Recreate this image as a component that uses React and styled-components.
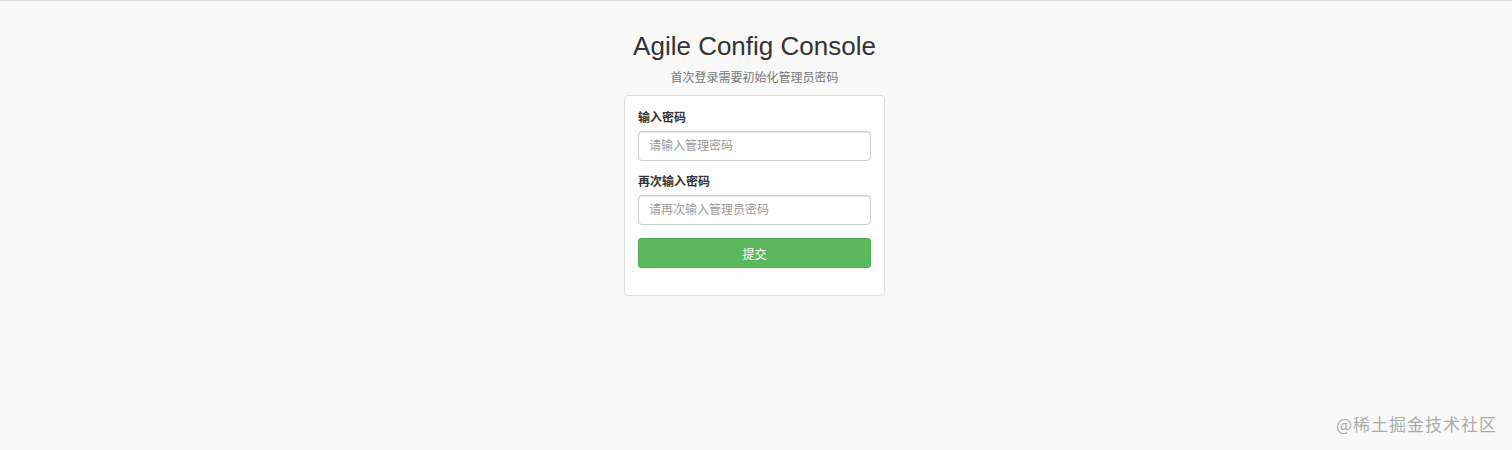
import React from "react";
import styled, { createGlobalStyle } from "styled-components";

const GlobalStyle = createGlobalStyle`
  html, body {
    margin: 0;
    padding: 0;
    background-color: #f9f9f9;
  }
  body {
    font-family: "Liberation Sans", Arial, "Noto Sans CJK SC", sans-serif;
    color: #333;
  }
  * {
    box-sizing: border-box;
  }
`;

const Page = styled.div`
  position: relative;
  height: 450px;
  padding-right: 3px;
  border-top: 1px solid #dcdcdc;
  display: flex;
  flex-direction: column;
  align-items: center;
  overflow: hidden;
`;

const Title = styled.h1`
  margin: 29px 0 0;
  font-size: 26px;
  font-weight: 400;
  line-height: 32px;
  color: #333;
`;

const Subtitle = styled.p`
  margin: 8px 0 0;
  font-size: 12px;
  line-height: 17px;
  color: #777;
`;

const Card = styled.form`
  margin-top: 8px;
  width: 261px;
  padding: 14px 13px 27px;
  background-color: #fff;
  border: 1px solid #ddd;
  border-radius: 4px;
  display: flex;
  flex-direction: column;
`;

const Field = styled.div`
  display: flex;
  flex-direction: column;
  margin-bottom: 13px;
`;

const Label = styled.label`
  font-size: 12px;
  font-weight: 700;
  line-height: 17px;
  color: #333;
  margin-bottom: 4px;
`;

const Input = styled.input`
  height: 30px;
  width: 100%;
  padding: 0 10px;
  font-size: 12px;
  font-family: inherit;
  color: #555;
  background-color: #fff;
  border: 1px solid #ccc;
  border-radius: 4px;
  outline: none;
  box-shadow: inset 0 1px 1px rgba(0, 0, 0, 0.075);

  &::placeholder {
    color: #999;
  }
`;

const SubmitButton = styled.button`
  height: 30px;
  width: 100%;
  font-size: 12px;
  font-family: inherit;
  color: #fff;
  background-color: #5cb85c;
  border: 1px solid #4cae4c;
  border-radius: 3px;
  cursor: pointer;
`;

const Watermark = styled.div`
  position: absolute;
  right: 15px;
  bottom: 14px;
  font-size: 17px;
  letter-spacing: 1px;
  color: rgba(160, 160, 160, 0.9);
  font-family: "Noto Sans CJK SC", sans-serif;
`;

function App() {
  return (
    <>
      <GlobalStyle />
      <Page>
        <Title>Agile Config Console</Title>
        <Subtitle>首次登录需要初始化管理员密码</Subtitle>
        <Card onSubmit={(e) => e.preventDefault()}>
          <Field>
            <Label>输入密码</Label>
            <Input type="password" placeholder="请输入管理密码" />
          </Field>
          <Field>
            <Label>再次输入密码</Label>
            <Input type="password" placeholder="请再次输入管理员密码" />
          </Field>
          <SubmitButton type="submit">提交</SubmitButton>
        </Card>
        <Watermark>@稀土掘金技术社区</Watermark>
      </Page>
    </>
  );
}

export default App;
